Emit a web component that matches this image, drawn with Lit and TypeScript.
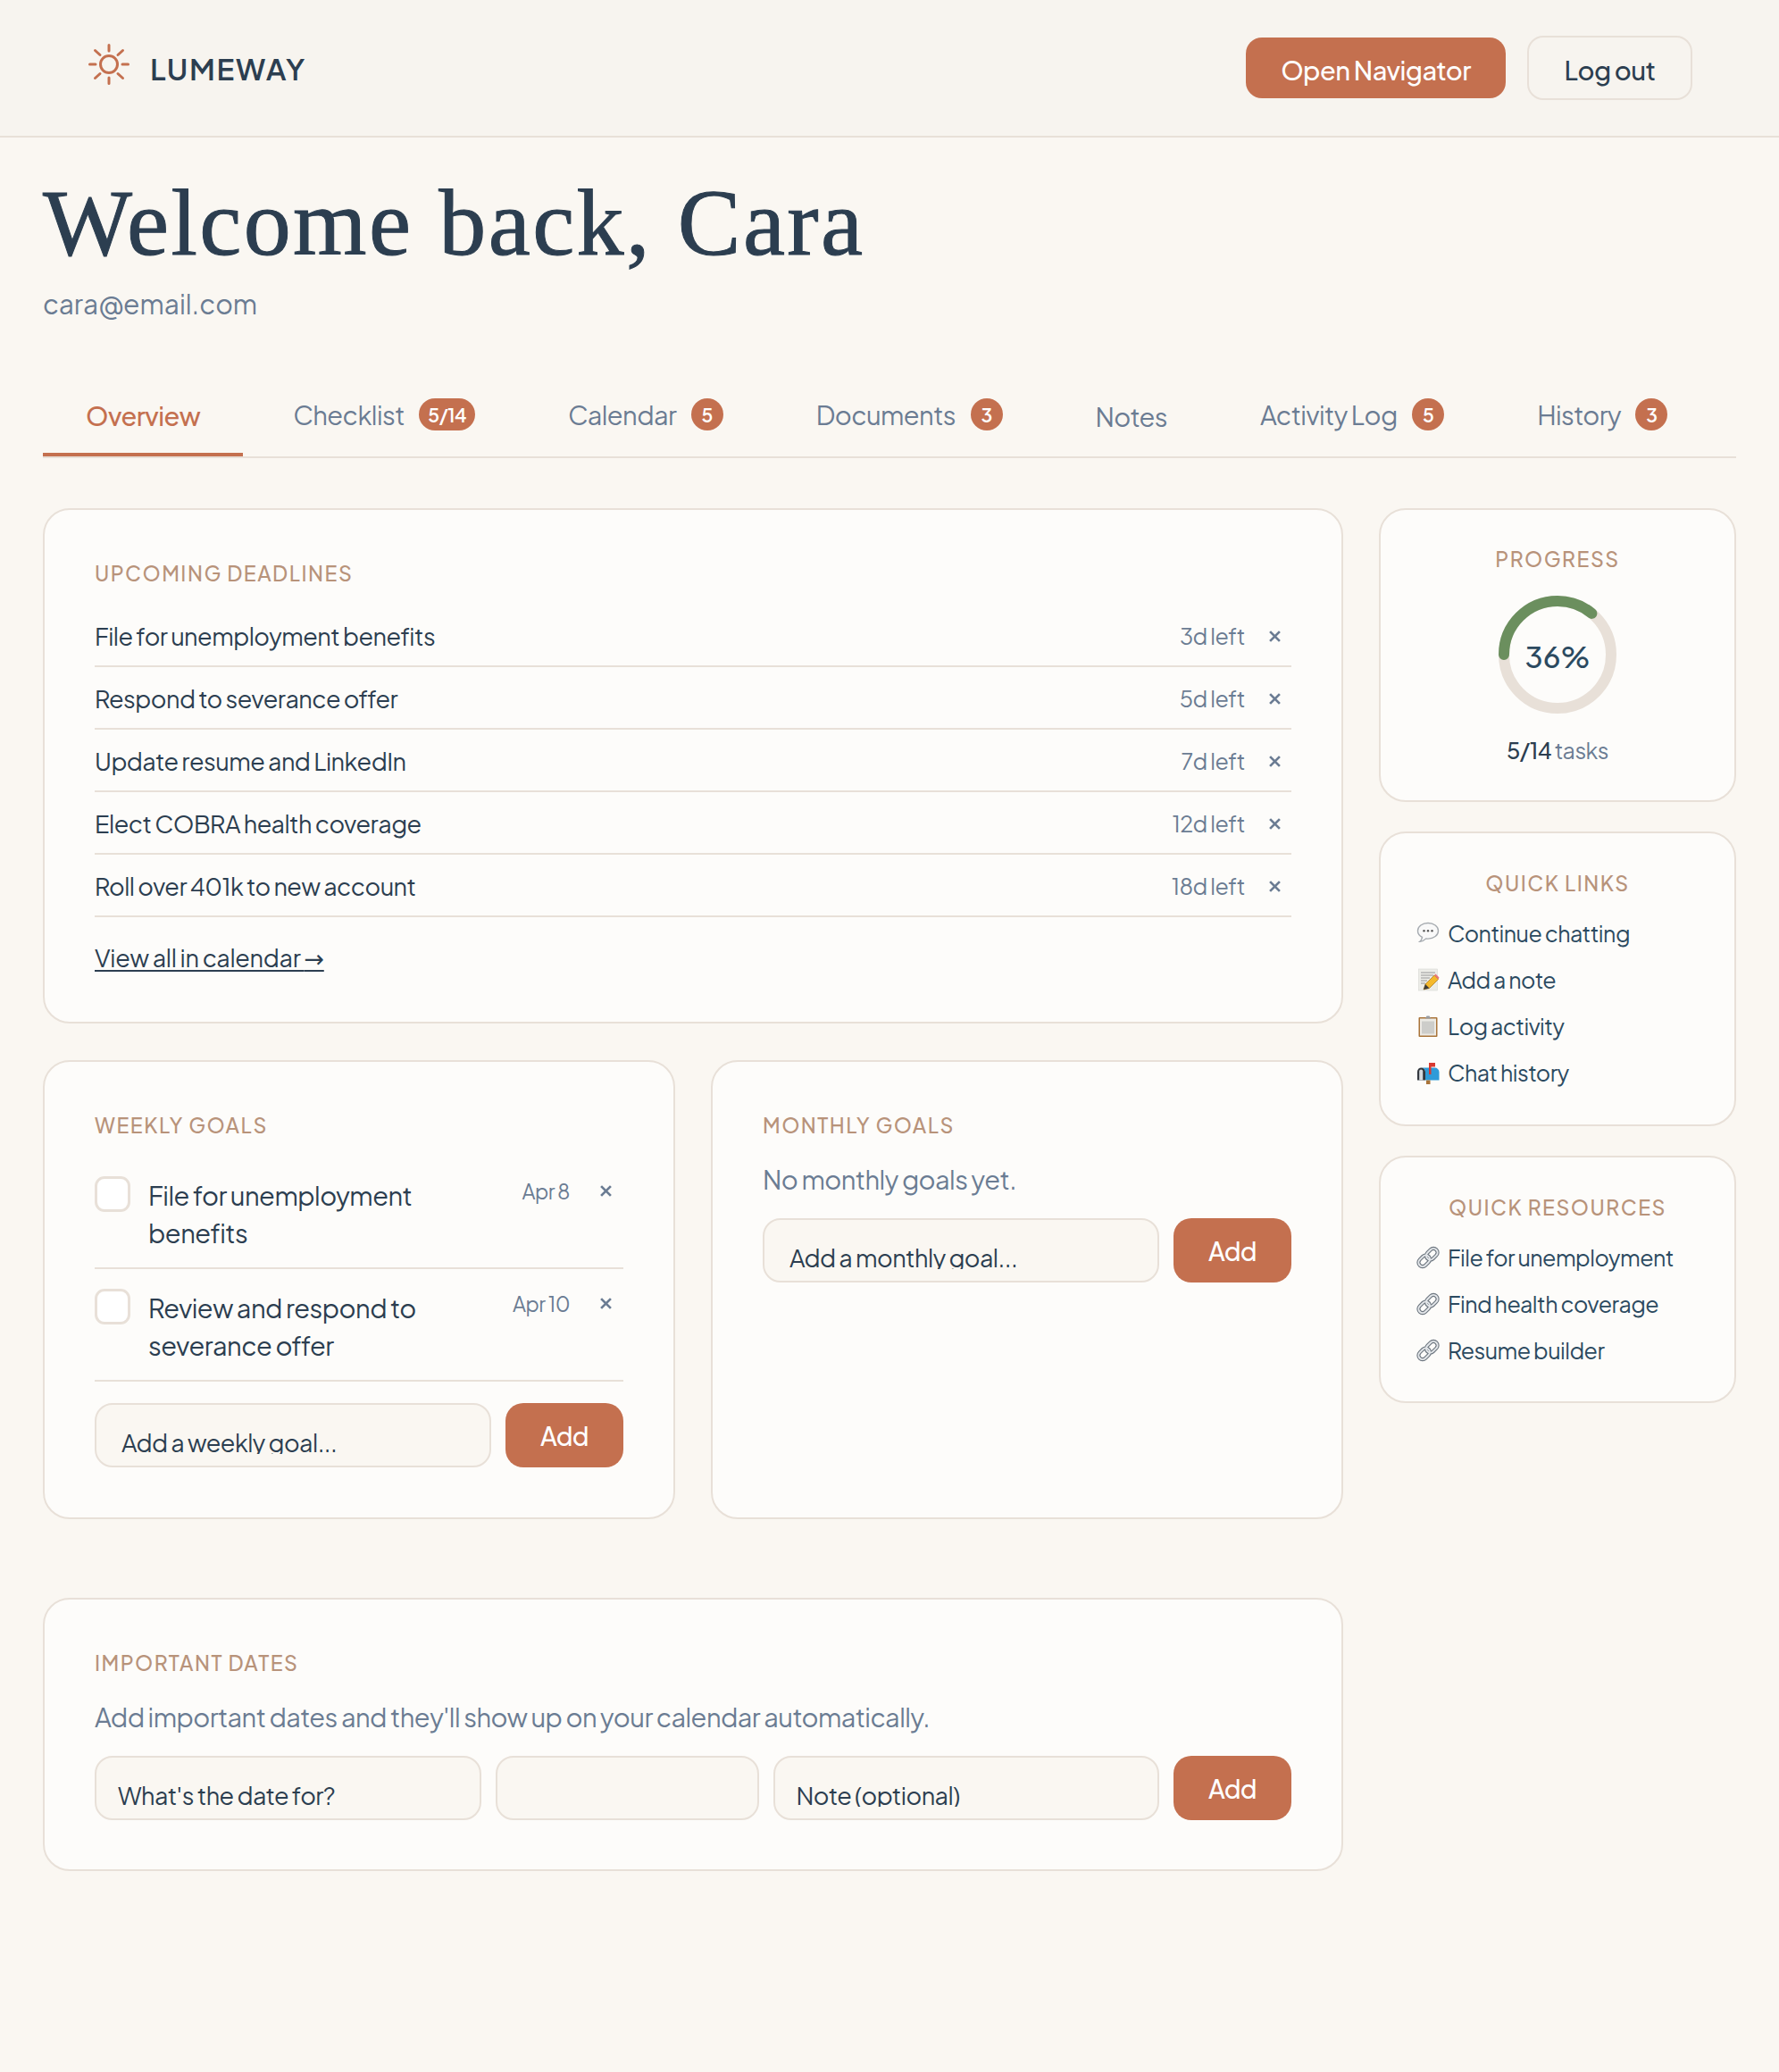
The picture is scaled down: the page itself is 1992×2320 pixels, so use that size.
import { LitElement, html, css, svg } from "lit";
import { customElement } from "lit/decorators.js";

const SANS = css`"Plus Jakarta Sans", Inter, "Liberation Sans", sans-serif`;

const sun = html`<svg class="sun" viewBox="0 0 46 46" fill="none" stroke="#c4704f" stroke-width="3" stroke-linecap="round">
  <circle cx="23" cy="23" r="9.500"/>
  <path d="M23 1.500v6.500M23 38v6.500M1.500 23h6.500M38 23h6.500M7.500 7.500l5.500 5M33 33.500l5.500 5M7.500 38.500l5.500-5M33 12.500l5.500-5"/>
</svg>`;

const icoChat = svg`<path d="M13 1.500C6.600 1.500 1.500 5.400 1.500 10.200c0 3 2 5.600 5 7.200-.2 1.900-1.100 3.500-2.600 4.800 3-.3 5.300-1.500 6.900-3.300.7.100 1.500.2 2.200.2 6.400 0 11.500-3.900 11.500-8.900S19.400 1.500 13 1.500z" fill="#f9f9f9" stroke="#a6abb0" stroke-width="1.400"/><circle cx="8.500" cy="10.300" r="1.200" fill="#555"/><circle cx="13" cy="10.300" r="1.200" fill="#555"/><circle cx="17.500" cy="10.300" r="1.200" fill="#555"/>`;
const icoNote = svg`<rect x="2.500" y="1" width="21" height="24" fill="#ecece7" stroke="#d8d8d4" stroke-width=".6"/><path d="M5 5h16M5 8h14M5 11h10M5 14h7M5 17h5" stroke="#8f8f8f" stroke-width=".9"/><path d="M8 24l2-6L20 8l4.500 4.500-10 10z" fill="#f4b82c" stroke="#a8751a" stroke-width=".7"/><path d="M20 8l1.500-1.500 4 4-1 2z" fill="#e8757a"/><path d="M8 24l2-6 4.500 4.500z" fill="#3c3c3c"/>`;
const icoClip = svg`<rect x="2.500" y="3" width="21" height="22" rx="1" fill="#a9743a"/><rect x="4" y="4.500" width="18" height="19" fill="#eceae5"/><rect x="6" y="7.500" width="14" height="14" fill="#cdcdca"/><path d="M10 4.500l1.500-3h3l1.500 3z" fill="#9a9da1"/>`;
const icoMail = svg`<path d="M1 12a4.500 4.500 0 0 1 9 0v9.500H1z" fill="#33383e"/><path d="M5.500 7.500h15a5 5 0 0 1 5 5v9H10v-9.500a4.500 4.500 0 0 0-4.500-4.500z" fill="#2f9bd8"/><path d="M3.200 21.500h4v-10a2 2 0 0 0-4 0z" fill="#d6dade"/><rect x="11" y="21.500" width="4.500" height="4.500" fill="#a9743a"/><path d="M14 2h7v4.500h-4.500V15H14z" fill="#d83a32"/>`;
const icoLink = svg`<g fill="none"><g stroke="#6e7780" stroke-width="4.200"><rect x="1.700" y="12.300" width="14" height="9" rx="4.500" transform="rotate(-45 8.700 16.800)"/><rect x="10.300" y="4.700" width="14" height="9" rx="4.500" transform="rotate(-45 17.300 9.200)"/></g><g stroke="#e4e7ea" stroke-width="2"><rect x="1.700" y="12.300" width="14" height="9" rx="4.500" transform="rotate(-45 8.700 16.800)"/><rect x="10.300" y="4.700" width="14" height="9" rx="4.500" transform="rotate(-45 17.300 9.200)"/></g></g>`;

const ico = (c: unknown) => html`<svg class="ico" viewBox="0 0 26 26">${c}</svg>`;

const deadlines: [string, string][] = [
  ["File for unemployment benefits", "3d left"],
  ["Respond to severance offer", "5d left"],
  ["Update resume and LinkedIn", "7d left"],
  ["Elect COBRA health coverage", "12d left"],
  ["Roll over 401k to new account", "18d left"],
];
const tabs: [string, string?][] = [
  ["Overview"],
  ["Checklist", "5/14"],
  ["Calendar", "5"],
  ["Documents", "3"],
  ["Notes"],
  ["Activity Log", "5"],
  ["History", "3"],
];
const goals: [string, string][] = [
  ["File for unemployment benefits", "Apr 8"],
  ["Review and respond to severance offer", "Apr 10"],
];
const links: [unknown, string][] = [
  [icoChat, "Continue chatting"],
  [icoNote, "Add a note"],
  [icoClip, "Log activity"],
  [icoMail, "Chat history"],
];
const resources = ["File for unemployment", "Find health coverage", "Resume builder"];

const cross = html`<svg class="x" viewBox="0 0 12 12" fill="none" stroke="#6b7c93" stroke-width="2.500"><path d="M1 1l10 10M11 1L1 11"/></svg>`;

@customElement("app-root")
export class AppRoot extends LitElement {
  static styles = css`
    :host { display: block; min-height: 2320px; background: #faf7f2; color: #2c3e50; font-family: ${SANS}; letter-spacing: -0.52px; word-spacing: -0.3px; }
    * { box-sizing: border-box; }
    .top { height: 154px; background: #f7f4ef; border-bottom: 2px solid #e8e0d8; display: flex; align-items: center; justify-content: space-between; padding: 0 97px 0 99px; }
    .brand { display: flex; align-items: center; gap: 23px; }
    .sun { width: 46px; height: 46px; margin-top: -8px; }
    .name { font-size: 33px; font-weight: 600; letter-spacing: 1.700px; word-spacing: 0; padding-top: 1px; }
    .acts { display: flex; align-items: center; gap: 24px; }
    button { font-family: inherit; letter-spacing: inherit; word-spacing: inherit; cursor: pointer; }
    .primary { background: #c4704f; color: #fff; border: 0; height: 68px; width: 291px; border-radius: 18px; font-size: 29px; font-weight: 500; padding: 4px 0 0; }
    .ghost { background: transparent; color: #2c3e50; border: 2px solid #e8e0d8; height: 72px; width: 185px; border-radius: 18px; font-size: 29px; font-weight: 500; padding: 4px 0 0; }
    main { padding: 0 48px; }
    h1 { margin: 0; padding-top: 38px; font: 400 106px/116px "Liberation Serif", serif; letter-spacing: 2.400px; word-spacing: 0; -webkit-text-stroke: 1px #2c3e50; }
    .mail { margin-top: 10px; font-size: 30px; line-height: 44px; color: #6b7c93; letter-spacing: 0; word-spacing: 0; }
    .tabs { display: flex; gap: 8px; margin-top: 63px; height: 88px; border-bottom: 2px solid #e8e0d8; }
    .tab { height: 86px; display: flex; align-items: center; gap: 16.500px; padding: 0 48px 8px; font-size: 29px; color: #6b7c93; letter-spacing: -0.56px; }
    .tab.on { color: #c4704f; font-weight: 500; border-bottom: 4px solid #c4704f; padding-bottom: 2px; padding-top: 0; }
    .tab.plain { padding-bottom: 4px; }
    .badge { height: 36px; min-width: 36px; padding: 0 10px; border-radius: 18px; background: #c4704f; color: #fff; font-size: 21px; font-weight: 600; display: flex; align-items: center; justify-content: center; }
    .grid { display: grid; grid-template-columns: 1456px 400px; gap: 40px; margin-top: 56px; align-items: start; }
    .col { display: flex; flex-direction: column; }
    .card { background: #fdfcfa; border: 2px solid #e8e0d8; border-radius: 30px; padding: 56px; }
    .lab { font-size: 23px; font-weight: 500; letter-spacing: 1.500px; word-spacing: 0; color: #b8937a; line-height: 30px; }
    .dl { height: 577px; }
    .rows { margin-top: 20px; }
    .row { height: 70px; display: flex; align-items: center; border-bottom: 2px solid #e8e0d8; font-size: 27px; padding-top: 2px; }
    .row .t { flex: 1; }
    .left { font-size: 25px; color: #6b7c93; }
    .x { width: 13px; height: 13px; flex: none; }
    .row .x { margin: 0 12px 0 27px; }
    .all { display: inline-block; margin-top: 27px; font-size: 27px; line-height: 36px; color: #2c3e50; text-decoration: underline; text-underline-offset: 3px; letter-spacing: -0.3px; }
    .arrow { font-family: "DejaVu Sans", sans-serif; }
    .two { display: grid; grid-template-columns: 708px 708px; gap: 40px; margin-top: 41px; }
    .g { height: 514px; }
    .goals { margin-top: 20px; }
    .goal { display: flex; height: 126px; border-bottom: 2px solid #e8e0d8; padding-top: 22px; }
    .cb { width: 40px; height: 40px; flex: none; border: 3px solid #e8e0d8; border-radius: 11px; background: #fff; }
    .gt { flex: 1; margin-left: 20px; font-size: 29px; line-height: 42px; padding-right: 60px; }
    .gd { font-size: 23px; color: #6b7c93; margin-top: 2px; white-space: nowrap; line-height: 30px; }
    .goal .x { margin: 10px 13px 0 34px; }
    .add { display: flex; gap: 16px; margin-top: 24px; }
    .in { flex: 1; min-width: 0; height: 72px; border: 2px solid #e8e0d8; border-radius: 20px; background: #faf7f2; font: 400 27px ${SANS}; color: #2c3e50; letter-spacing: -0.52px; word-spacing: -0.3px; padding: 30px 28px 15px; outline: none; }
    .in::placeholder { color: #2c3e50; opacity: 1; height: 30px; overflow: hidden; }
    .btn { width: 132px; height: 72px; flex: none; border: 0; border-radius: 20px; background: #c4704f; color: #fff; font-size: 28px; font-weight: 500; padding: 0; }
    .none { font-size: 29px; line-height: 40px; color: #6b7c93; margin-top: 25px; }
    .imp { margin-top: 88px; height: 306px; }
    .imp .in { padding-left: 24px; padding-right: 24px; }
    .date { flex: none; width: 295px; }
    .side { gap: 33px; }
    .sc { padding: 40px 38px; text-align: center; }
    .ring { display: block; width: 132px; height: 132px; }
    .ringw { position: relative; width: 132px; height: 132px; margin: 26px auto 0; }
    .pct { position: absolute; inset: 0; padding-top: 3px; display: flex; align-items: center; justify-content: center; font-size: 33px; font-weight: 500; color: #2c4a60; letter-spacing: 0; }
    .cnt { margin-top: 24px; font-size: 25px; line-height: 34px; font-weight: 500; }
    .cnt span { color: #6b7c93; font-weight: 400; }
    .pc { height: 329px; }
    .ql { height: 330px; padding-top: 41px; }
    .qr { height: 277px; padding-top: 41px; }
    .li { display: flex; align-items: center; gap: 9px; height: 52px; font-size: 25px; color: #2c4a60; text-align: left; }
    .list { margin-top: 15px; margin-left: 2px; }
    .ico { width: 26px; height: 26px; flex: none; }
  `;

  render() {
    return html`
      <header class="top">
        <div class="brand">${sun}<span class="name">LUMEWAY</span></div>
        <div class="acts"><button class="primary">Open Navigator</button><button class="ghost">Log out</button></div>
      </header>
      <main>
        <h1>Welcome back, Cara</h1>
        <div class="mail">cara@email.com</div>
        <nav class="tabs">
          ${tabs.map(([t, b], i) => html`<div class="tab ${i === 0 ? "on" : ""} ${!b && i ? "plain" : ""}"><span>${t}</span>${b ? html`<span class="badge">${b}</span>` : ""}</div>`)}
        </nav>
        <div class="grid">
          <div class="col">
            <section class="card dl">
              <div class="lab">UPCOMING DEADLINES</div>
              <div class="rows">
                ${deadlines.map(([t, l]) => html`<div class="row"><span class="t">${t}</span><span class="left">${l}</span>${cross}</div>`)}
              </div>
              <a class="all">View all in calendar <span class="arrow">→</span></a>
            </section>
            <div class="two">
              <section class="card g">
                <div class="lab">WEEKLY GOALS</div>
                <div class="goals">
                  ${goals.map(([t, d]) => html`<div class="goal"><span class="cb"></span><span class="gt">${t}</span><span class="gd">${d}</span>${cross}</div>`)}
                </div>
                <div class="add"><input class="in" placeholder="Add a weekly goal..." /><button class="btn">Add</button></div>
              </section>
              <section class="card g">
                <div class="lab">MONTHLY GOALS</div>
                <div class="none">No monthly goals yet.</div>
                <div class="add"><input class="in" placeholder="Add a monthly goal..." /><button class="btn">Add</button></div>
              </section>
            </div>
            <section class="card imp">
              <div class="lab">IMPORTANT DATES</div>
              <div class="none">Add important dates and they'll show up on your calendar automatically.</div>
              <div class="add"><input class="in" placeholder="What's the date for?" /><input class="in date" /><input class="in" placeholder="Note (optional)" /><button class="btn">Add</button></div>
            </section>
          </div>
          <aside class="col side">
            <section class="card sc pc">
              <div class="lab">PROGRESS</div>
              <div class="ringw">
                <svg class="ring" viewBox="0 0 132 132"><circle cx="66" cy="66" r="60" fill="none" stroke="#e8e0d8" stroke-width="12"/><circle cx="66" cy="66" r="60" fill="none" stroke="#6b8f5e" stroke-width="12" stroke-linecap="round" stroke-dasharray="135.700 377" transform="rotate(180 66 66)"/></svg>
                <div class="pct">36%</div>
              </div>
              <div class="cnt">5/14 <span>tasks</span></div>
            </section>
            <section class="card sc ql">
              <div class="lab">QUICK LINKS</div>
              <div class="list">${links.map(([i, t]) => html`<div class="li">${ico(i)}<span>${t}</span></div>`)}</div>
            </section>
            <section class="card sc qr">
              <div class="lab">QUICK RESOURCES</div>
              <div class="list">${resources.map((t) => html`<div class="li">${ico(icoLink)}<span>${t}</span></div>`)}</div>
            </section>
          </aside>
        </div>
      </main>
    `;
  }
}
